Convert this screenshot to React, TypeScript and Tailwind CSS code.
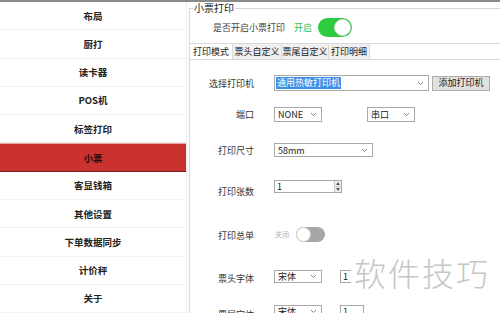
import React from "react";

const menu = ["布局", "厨打", "读卡器", "POS机", "标签打印", "小票", "客显钱箱", "其他设置", "下单数据同步", "计价秤", "关于"];
const tabs = [
  { name: "打印模式", w: "w-[43px]", active: true },
  { name: "票头自定义", w: "w-[49px]" },
  { name: "票尾自定义", w: "w-[47px]" },
  { name: "打印明细", w: "w-[41px]" },
];

function Chevron() {
  return (
    <svg width="7" height="5" viewBox="0 0 7 5" className="shrink-0">
      <path d="M1 1 L3.5 3.5 L6 1" fill="none" stroke="#777" strokeWidth="0.9" />
    </svg>
  );
}

function Select({ value, w, h = "h-[15px]", highlight }: { value: string; w: string; h?: string; highlight?: boolean }) {
  return (
    <div className={`${w} ${h} flex items-center justify-between border border-[#a9a9a9] bg-white pl-[1px] pr-[4px]`}>
      {highlight ? (
        <span className="bg-[#3d8fe6] px-[1px] text-[9px] leading-[12px] text-white">{value}</span>
      ) : (
        <span className="pl-[2px] text-[9px] leading-none text-[#222]">{value}</span>
      )}
      <Chevron />
    </div>
  );
}

function Label({ children, className = "" }: { children: React.ReactNode; className?: string }) {
  return <div className={`w-[64px] shrink-0 text-right text-[9px] leading-none text-[#333] ${className}`}>{children}</div>;
}

export default function App() {
  return (
    <div className="relative flex h-[313px] w-[500px] flex-col overflow-hidden bg-white font-['Noto_Sans_CJK_SC',sans-serif]">
      <div className="h-[2px] shrink-0 bg-[#8a8a8a]" />
      <div className="flex min-h-0 flex-1">
        <nav className="flex w-[187px] shrink-0 flex-col border-r border-[#ececec]">
          {menu.map((m) =>
            m === "小票" ? (
              <div
                key={m}
                className="flex h-[28.3px] shrink-0 items-center justify-center border-t border-b border-t-[#e8a3a3] border-b-[#7c1c1c] bg-[#c9322e] text-[9.5px] font-bold text-[#2a0b0b]"
              >
                {m}
              </div>
            ) : (
              <div
                key={m}
                className="flex h-[28.3px] shrink-0 items-center justify-center border-b border-[#f1f1f1] text-[9.5px] font-bold text-[#222]"
              >
                {m}
              </div>
            )
          )}
        </nav>

        <div className="flex-1 pl-[2px]">
          <fieldset className="h-full border-t border-l border-[#d6d6d6]">
            <legend className="ml-[3px] px-[1px] text-[10px] leading-[12px] text-[#222]">小票打印</legend>

            <div className="mt-[4px] flex h-[19px] items-center pl-[23px]">
              <span className="text-[9px] text-[#444]">是否开启小票打印</span>
              <span className="ml-[9px] text-[9px] text-[#34c24a]">开启</span>
              <div className="ml-[6px] flex h-[19px] w-[34px] items-center justify-end rounded-full bg-[#2ecb3f] pr-[1px]">
                <div className="h-[17px] w-[17px] rounded-full border border-[#dcdcdc] bg-white" />
              </div>
            </div>

            <div className="mt-[6px] flex h-[17px] border-t border-b border-[#d9d9d9]">
              {tabs.map((t) => (
                <div
                  key={t.name}
                  className={`${t.w} flex items-center justify-center border-r border-[#d9d9d9] text-[9px] text-[#222] ${
                    t.active ? "bg-white" : "bg-[#f0f0f0]"
                  }`}
                >
                  {t.name}
                </div>
              ))}
            </div>

            <div className="flex flex-col">
              <div className="mt-[15px] flex h-[16px] items-center">
                <Label>选择打印机</Label>
                <div className="ml-[20px] flex items-center">
                  <Select value="通用热敏打印机" w="w-[155px]" h="h-[16px]" highlight />
                  <div className="ml-[3px] flex h-[15px] w-[58px] items-center justify-center border border-[#adadad] bg-[#e1e1e1] text-[9px] text-[#222]">
                    添加打印机
                  </div>
                </div>
              </div>

              <div className="mt-[16px] flex h-[15px] items-center">
                <Label>端口</Label>
                <div className="ml-[20px] flex items-center gap-[45px]">
                  <Select value="NONE" w="w-[48px]" />
                  <Select value="串口" w="w-[48px]" />
                </div>
              </div>

              <div className="mt-[21px] flex h-[14px] items-center">
                <Label>打印尺寸</Label>
                <div className="ml-[20px]">
                  <Select value="58mm" w="w-[99px]" h="h-[14px]" />
                </div>
              </div>

              <div className="mt-[23px] flex h-[13px] items-center">
                <Label className="mt-[9px]">打印张数</Label>
                <div className="ml-[20px] flex h-[13px] w-[68px] items-center justify-between border border-[#a9a9a9] bg-white pl-[2px]">
                  <span className="text-[9px] leading-none text-[#222]">1</span>
                  <div className="flex h-full w-[7px] flex-col border-l border-[#c8c8c8]">
                    <div className="flex flex-1 items-center justify-center border-b border-[#c8c8c8] bg-[#f0f0f0]">
                      <svg width="4" height="3" viewBox="0 0 4 3">
                        <path d="M0 3 L2 0 L4 3 Z" fill="#555" />
                      </svg>
                    </div>
                    <div className="flex flex-1 items-center justify-center bg-[#f0f0f0]">
                      <svg width="4" height="3" viewBox="0 0 4 3">
                        <path d="M0 0 L2 3 L4 0 Z" fill="#555" />
                      </svg>
                    </div>
                  </div>
                </div>
              </div>

              <div className="mt-[34px] flex h-[15px] items-center">
                <Label className="mt-[1px]">打印总单</Label>
                <span className="ml-[21px] text-[7px] text-[#b0b0b0]">关闭</span>
                <div className="ml-[7px] flex h-[15px] w-[29px] items-center rounded-full bg-[#a6a6a6]">
                  <div className="h-[15px] w-[15px] rounded-full border border-[#cfcfcf] bg-white" />
                </div>
              </div>

              <div className="mt-[28px] flex h-[13px] items-center">
                <Label className="mt-[3px]">票头字体</Label>
                <div className="ml-[20px] flex items-center gap-[18px]">
                  <Select value="宋体" w="w-[48px]" h="h-[13px]" />
                  <div className="flex h-[13px] w-[24px] items-center border border-[#a9a9a9] pl-[2px] text-[9px] leading-none text-[#222]">
                    1
                  </div>
                </div>
              </div>

              <div className="mt-[22px] flex h-[13px] items-center">
                <Label className="mt-[5px]">票尾字体</Label>
                <div className="ml-[20px] flex items-center gap-[18px]">
                  <Select value="宋体" w="w-[48px]" h="h-[13px]" />
                  <div className="flex h-[13px] w-[24px] items-center border border-[#a9a9a9] pl-[2px] text-[9px] leading-none text-[#222]">
                    1
                  </div>
                </div>
              </div>
            </div>
          </fieldset>
        </div>
      </div>

      <div className="absolute top-[253px] left-[351px] bg-white pl-[3px] pr-[6px] text-[32px] leading-[38px] font-light tracking-[2px] text-[#c6c6c6]">
        软件技巧
      </div>
    </div>
  );
}
